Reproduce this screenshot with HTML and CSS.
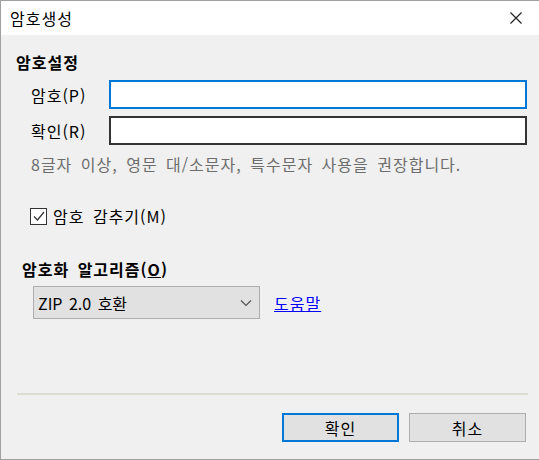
FILE: index.html
```html
<!DOCTYPE html>
<html lang="ko">
<head>
    <meta charset="UTF-8">
    <title>암호생성</title>
    <link rel="stylesheet" href="styles.css">
</head>
<body>

    <div class="window">
        <div class="titlebar">
            <span class="title">암호생성</span>
            <svg class="close" width="12" height="12" viewBox="0 0 12 12">
                <path d="M0.5 0.5 L11.5 11.5 M11.5 0.5 L0.5 11.5" stroke="#222" stroke-width="1.2" fill="none"/>
            </svg>
        </div>

        <div class="content">
            <div class="section-title">암호설정</div>

            <div class="field-row">
                <label class="field-label">암호(P)</label>
                <div class="textbox focused"></div>
            </div>
            <div class="field-row">
                <label class="field-label">확인(R)</label>
                <div class="textbox"></div>
            </div>

            <p class="hint">8글자 이상, 영문 대/소문자, 특수문자 사용을 권장합니다.</p>

            <div class="check-row">
                <span class="checkbox">
                    <svg width="14" height="14" viewBox="0 0 14 14">
                        <path d="M2 7.5 L5.5 11 L12 3" stroke="#333" stroke-width="1.2" fill="none"/>
                    </svg>
                </span>
                <span>암호 감추기(M)</span>
            </div>

            <div class="section-title algo">암호화 알고리즘(<u>O</u>)</div>

            <div class="select-row">
                <div class="select">
                    <span class="select-text">ZIP 2.0 호환</span>
                    <svg width="12" height="8" viewBox="0 0 12 8">
                        <path d="M1 1.5 L6 6.5 L11 1.5" stroke="#555" stroke-width="1.2" fill="none"/>
                    </svg>
                </div>
                <a class="help-link" href="#">도움말</a>
            </div>

            <div class="separator"></div>

            <div class="buttons">
                <button class="btn default">확인</button>
                <button class="btn">취소</button>
            </div>
        </div>
    </div>

</body>
</html>
```

FILE: styles.css
```css
/* Dialog window */
body {
    margin: 0;
    background: #f0f0f0;
    font-family: 'Noto Sans CJK KR', 'Noto Sans', sans-serif;
    font-size: 16px;
    line-height: 22px;
    letter-spacing: 1px;
    word-spacing: 3px;
    color: #000;
}

.window {
    width: 538px;
    height: 458px;
    border-left: 1px solid #a0a0a0;
    border-top: 1px solid #a0a0a0;
    border-bottom: 1px solid #a0a0a0;
    background: #f0f0f0;
}

.titlebar {
    height: 34px;
    background: #fff;
    display: flex;
    align-items: center;
    justify-content: space-between;
    padding: 0 17px 0 9px;
}

.title {
    margin-top: -1px;
}

.close {
    margin-top: -1px;
}

.content {
    padding: 0 11px 0 15px;
}

.section-title {
    font-weight: bold;
    margin-top: 16px;
    height: 22px;
}

.field-row {
    display: flex;
    align-items: center;
    margin-top: 7px;
}

.field-label {
    width: 93px;
    padding-left: 15px;
    box-sizing: border-box;
}

.textbox {
    width: 418px;
    height: 29px;
    box-sizing: border-box;
    background: #fff;
    border: 2px solid #333;
}

.textbox.focused {
    border-color: #0078d7;
}

.hint {
    margin: 8px 0 0 15px;
    color: #6d6d6d;
    height: 22px;
}

.check-row {
    display: flex;
    align-items: center;
    margin: 30px 0 0 14px;
    gap: 6px;
    height: 22px;
}

.checkbox {
    width: 17px;
    height: 17px;
    box-sizing: border-box;
    border: 1px solid #333;
    background: #fff;
    display: flex;
    align-items: center;
    justify-content: center;
}

.algo {
    margin: 31px 0 0 6px;
}

.select-row {
    display: flex;
    align-items: center;
    margin-top: 6px;
    padding-left: 17px;
}

.select {
    width: 227px;
    height: 33px;
    box-sizing: border-box;
    border: 1px solid #adadad;
    background: #e1e1e1;
    display: flex;
    align-items: center;
    justify-content: space-between;
    padding: 0 7px 0 4px;
}

.select-text {
    letter-spacing: 0;
    word-spacing: 2px;
}

.help-link {
    margin-left: 14px;
    color: #0000ff;
    text-decoration: underline;
}

.separator {
    margin-top: 74px;
    height: 2px;
    background: #dcdcd0;
    width: 511px;
    margin-left: 1px;
}

.buttons {
    display: flex;
    justify-content: flex-end;
    gap: 10px;
    margin-top: 18px;
    padding-right: 2px;
}

.btn {
    width: 117px;
    height: 29px;
    font-family: inherit;
    font-size: 16px;
    letter-spacing: 1px;
    background: #e1e1e1;
    border: 1px solid #adadad;
    padding: 0;
}

.btn.default {
    border: 2px solid #0078d7;
}
```
